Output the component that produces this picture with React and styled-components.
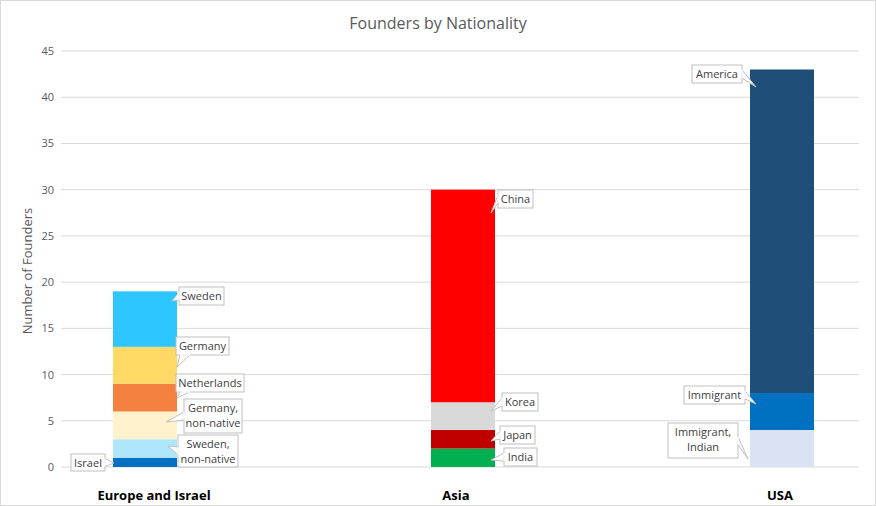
import React from 'react'
import styled, { createGlobalStyle } from 'styled-components'

const Global = createGlobalStyle`
  body { margin: 0; background: #fff; font-family: "Open Sans", "Liberation Sans", sans-serif; }
`

const Y0 = 466
const UNIT = 416 / 45
const y = v => Y0 - v * UNIT

const bars = [
  { name: 'Europe and Israel', x: 112, labelX: 153, segs: [
    [0, 1, '#0070c0'], [1, 3, '#aee6fb'], [3, 6, '#fff2cc'],
    [6, 9, '#f4813f'], [9, 13, '#ffd966'], [13, 19, '#2ec6ff']] },
  { name: 'Asia', x: 430, labelX: 455, segs: [
    [0, 2, '#00b050'], [2, 4, '#c00000'], [4, 7, '#d9d9d9'], [7, 30, '#ff0000']] },
  { name: 'USA', x: 749, labelX: 779, segs: [
    [0, 4, '#dae3f3'], [4, 8, '#0070c0'], [8, 43, '#1f4e79']] },
]

// box: x, y, w, h; tip: point in bar; side: edge the pointer leaves from
const callouts = [
  { lines: ['Sweden'], x: 178, y: 286, w: 45, h: 18, tip: [171, 300], side: 'l' },
  { lines: ['Germany'], x: 175, y: 336, w: 53, h: 18, tip: [176, 366], side: 'b' },
  { lines: ['Netherlands'], x: 175, y: 373, w: 68, h: 18, tip: [176, 397], side: 'b' },
  { lines: ['Germany,', 'non-native'], x: 183, y: 398, w: 58, h: 34, tip: [165, 421], side: 'l' },
  { lines: ['Sweden,', 'non-native'], x: 177, y: 434, w: 60, h: 32, tip: [167, 445], side: 'l' },
  { lines: ['Israel'], x: 70, y: 453, w: 34, h: 17, tip: [113, 462], side: 'r' },
  { lines: ['China'], x: 497, y: 189, w: 35, h: 18, tip: [490, 212], side: 'l' },
  { lines: ['Korea'], x: 501, y: 392, w: 36, h: 18, tip: [490, 410], side: 'l' },
  { lines: ['Japan'], x: 499, y: 425, w: 35, h: 18, tip: [490, 440], side: 'l' },
  { lines: ['India'], x: 503, y: 447, w: 33, h: 18, tip: [490, 459], side: 'l' },
  { lines: ['America'], x: 691, y: 64, w: 50, h: 18, tip: [755, 86], side: 'r' },
  { lines: ['Immigrant'], x: 683, y: 385, w: 61, h: 18, tip: [755, 403], side: 'r' },
  { lines: ['Immigrant,', 'Indian'], x: 667, y: 422, w: 70, h: 35, tip: [747, 458], side: 'r' },
]

function pointer(c) {
  const { x, y: by, w, h, tip, side } = c
  let a, b
  if (side === 'l') { a = [x, by + h / 2 - 4]; b = [x, by + h / 2 + 4] }
  else if (side === 'r') { a = [x + w, by + h / 2 - 4]; b = [x + w, by + h / 2 + 4] }
  else { a = [x + 4, by + h]; b = [x + 14, by + h] }
  return `${a[0]},${a[1]} ${tip[0]},${tip[1]} ${b[0]},${b[1]}`
}

export default function App() {
  return (
    <>
      <Global />
      <Frame>
        <Title>Founders by Nationality</Title>
        <Chart width="876" height="506">
          {Array.from({ length: 10 }, (_, i) => (
            <g key={i}>
              <line x1="60" x2="858" y1={y(i * 5)} y2={y(i * 5)} stroke="#d9d9d9" />
              <text x="53" y={y(i * 5) + 4} textAnchor="end" fontSize="11" fill="#595959">{i * 5}</text>
            </g>
          ))}
          <text transform="translate(31 270) rotate(-90)" textAnchor="middle" fontSize="13" fill="#595959">Number of Founders</text>
          {bars.map(b => (
            <g key={b.name}>
              {b.segs.map(([f, t, c]) => (
                <rect key={c + f} x={b.x} width="64" y={y(t)} height={y(f) - y(t)} fill={c} />
              ))}
              <text x={b.labelX} y="499" textAnchor="middle" fontSize="13" fontWeight="700" fill="#000">{b.name}</text>
            </g>
          ))}
          {callouts.map(c => (
            <g key={c.lines.join()}>
              <polygon points={pointer(c)} fill="#fff" stroke="#bfbfbf" />
              <rect x={c.x} y={c.y} width={c.w} height={c.h} fill="#fff" stroke="#bfbfbf" />
              <line x1={c.side === 'b' ? c.x + 4 : c.side === 'l' ? c.x : c.x + c.w}
                x2={c.side === 'b' ? c.x + 14 : c.side === 'l' ? c.x : c.x + c.w}
                y1={c.side === 'b' ? c.y + c.h : c.y + c.h / 2 - 4}
                y2={c.side === 'b' ? c.y + c.h : c.y + c.h / 2 + 4}
                stroke="#fff" strokeWidth="1.5" />
              {c.lines.map((l, i) => (
                <text key={l} x={c.x + c.w / 2} y={c.y + 13 + i * 15} textAnchor="middle" fontSize="11" fill="#404040">{l}</text>
              ))}
            </g>
          ))}
        </Chart>
      </Frame>
    </>
  )
}

const Frame = styled.div`
  position: relative;
  width: 874px;
  height: 504px;
  border: 1px solid #d9d9d9;
  overflow: hidden;
  font-family: "Open Sans", "Liberation Sans", sans-serif;
`

const Title = styled.div`
  position: absolute;
  top: 11px;
  left: 0;
  right: 0;
  text-align: center;
  font-size: 16px;
  color: #595959;
`

const Chart = styled.svg`
  display: block;
  font-family: "Open Sans", "Liberation Sans", sans-serif;
`
